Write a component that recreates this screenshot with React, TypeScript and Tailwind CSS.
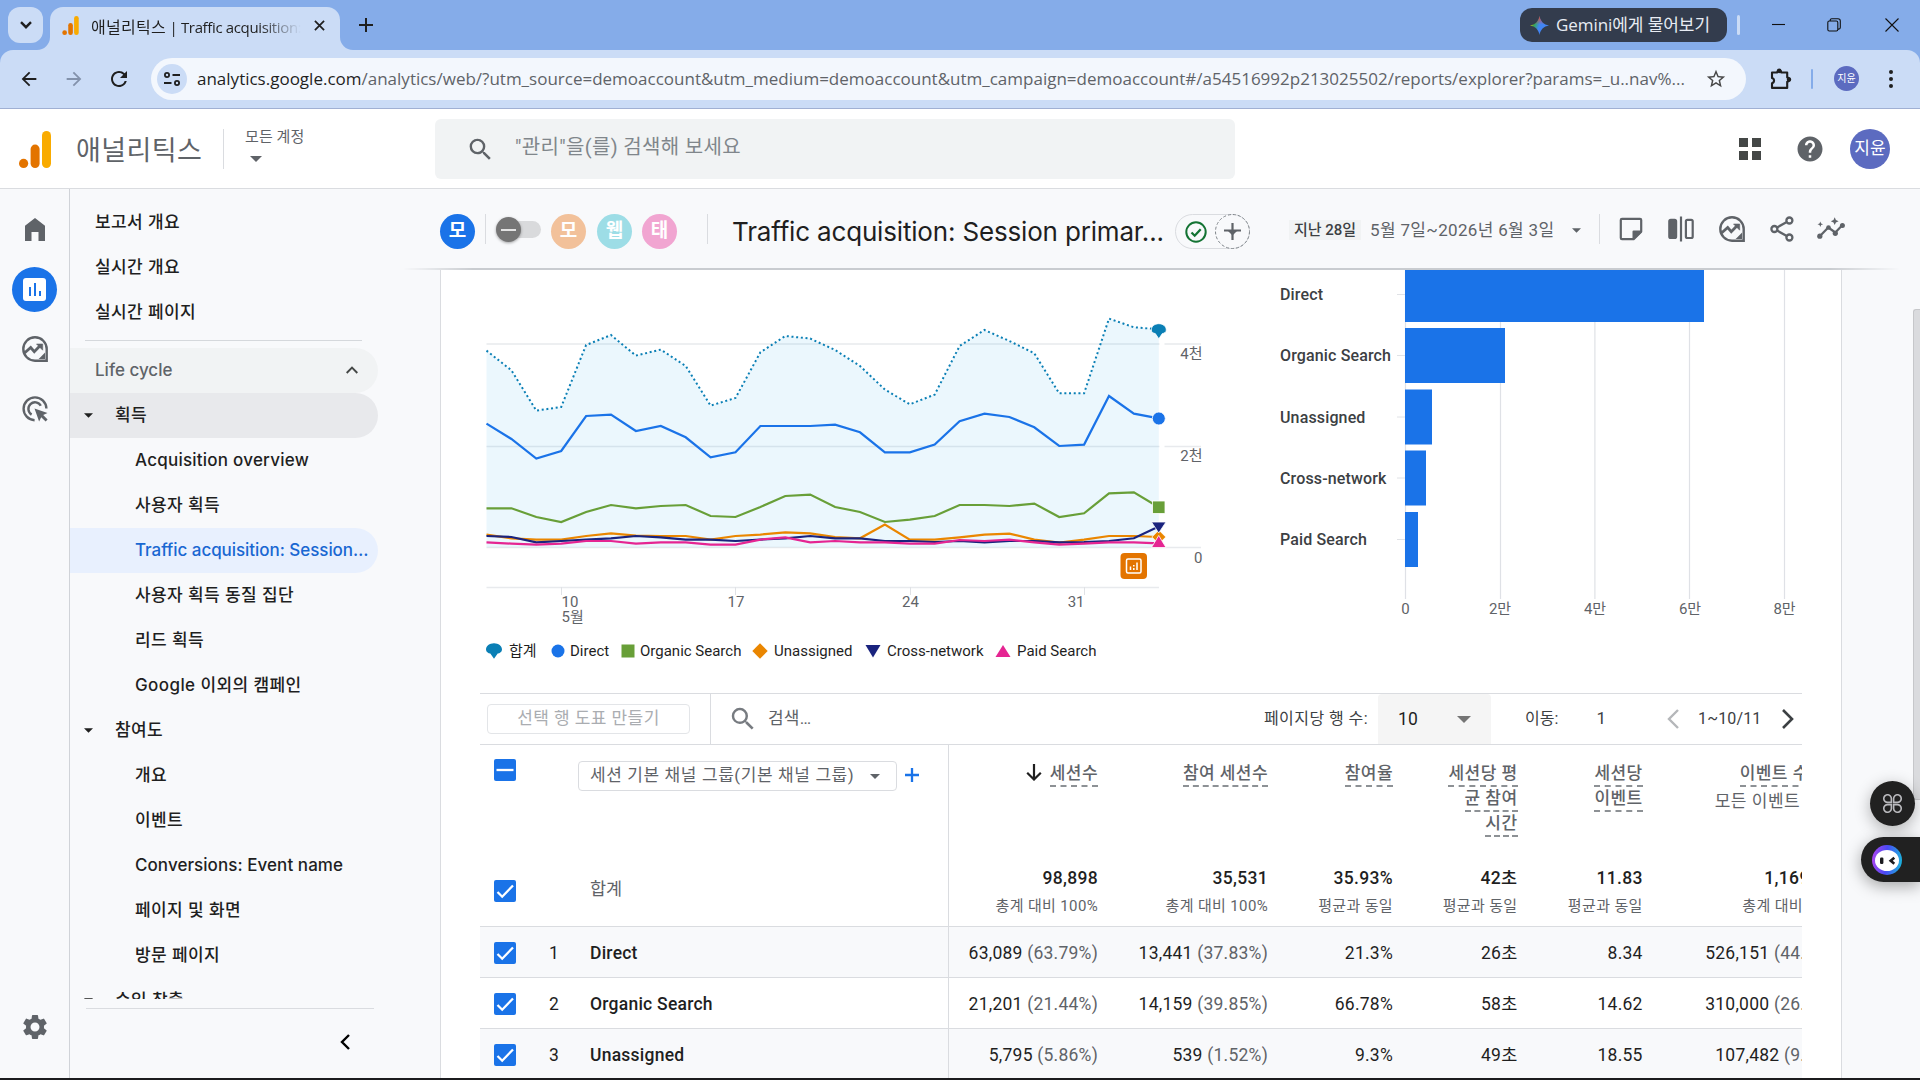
import type { ReactNode } from "react";
import { MdArrowBack, MdArrowForward, MdHelp, MdRefresh, MdSearch, MdSettings, MdStarOutline } from "react-icons/md";

const FONT_INTER = "font-['Inter','Noto_Sans_CJK_KR',sans-serif]";
const FONT_ROBOTO = "font-['Roboto','Noto_Sans_CJK_KR',sans-serif]";
const FONT_CHROME = "font-['Open_Sans','Noto_Sans_CJK_KR',sans-serif]";

/* ---------- icons ---------- */

function AnalyticsLogo({ className }: { className: string }) {
  return (
    <svg viewBox="0 0 32 37" className={className}>
      <circle cx="4.6" cy="32.4" r="4.6" fill="#e37400" />
      <rect x="11.6" y="13.6" width="9" height="23.4" rx="4.5" fill="#e37400" />
      <rect x="23" y="0" width="9" height="37" rx="4.5" fill="#f9ab00" />
    </svg>
  );
}

function ExploreIcon({ className }: { className: string }) {
  return (
    <svg viewBox="0 0 26 26" className={className} fill="none" stroke="#5f6368">
      <path d="M13 1.3a11.7 11.7 0 1 0 0 23.4h11.7V13A11.7 11.7 0 0 0 13 1.3z" strokeWidth="2.4" />
      <path d="M18.5 22.2l3.8-3.8v3.8z" fill="#5f6368" strokeWidth="1.6" />
      <path d="M2.5 17l6.2-5.5 3.6 4.2 6.2-6.4" strokeWidth="2.8" />
      <path d="M14.5 8h6.2v6.2z" fill="#5f6368" strokeWidth="0.6" />
    </svg>
  );
}

function AdsClickIcon() {
  return (
    <svg viewBox="0 0 26 26" className="h-[26px] w-[26px]" fill="none" stroke="#5f6368" strokeWidth="2.4">
      <path d="M12.6 24.2A11.4 11.4 0 1 1 24.4 12.6" />
      <path d="M9.6 18.6A6.6 6.6 0 1 1 18.8 9.8" />
      <path d="M12.5 12.5l13 4.6-4.3 2 4.4 4.5-2 2-4.4-4.4-2.1 4.3z" fill="#5f6368" stroke="none" />
    </svg>
  );
}

function Caret({ className }: { className: string }) {
  return (
    <svg viewBox="0 0 10 5" className={className} fill="currentColor">
      <path d="M0 0h10L5 5z" />
    </svg>
  );
}

/* ---------- browser chrome ---------- */

function TabStrip() {
  return (
    <div className={`flex h-[50px] shrink-0 bg-[#85ace9] text-[#1f1f1f] ${FONT_CHROME}`}>
      <div className="mt-[7px] ml-2 flex h-9 w-[35px] items-center justify-center rounded-xl bg-[#cbdcf6]">
        <svg viewBox="0 0 12 8" className="h-2 w-3" fill="none" stroke="#1f1f1f" strokeWidth="2.4">
          <path d="M1 1.2l5 5 5-5" />
        </svg>
      </div>
      <div className="relative mt-[7px] ml-[7px] flex h-[43px] w-[290px] items-center rounded-t-[13px] bg-[#cbdcf6]">
        <svg viewBox="0 0 13 13" className="absolute bottom-0 -left-[13px] h-[13px] w-[13px]">
          <path d="M13 0v13H0A13 13 0 0 0 13 0z" fill="#cbdcf6" />
        </svg>
        <svg viewBox="0 0 13 13" className="absolute -right-[13px] bottom-0 h-[13px] w-[13px]">
          <path d="M0 0v13h13A13 13 0 0 1 0 0z" fill="#cbdcf6" />
        </svg>
        <AnalyticsLogo className="mb-[7px] ml-3 h-[19px] w-[17px]" />
        <div className="mb-[4px] ml-3 w-[210px] overflow-hidden whitespace-nowrap [mask-image:linear-gradient(to_right,black_80%,transparent_100%)]">
          <span className="text-[16px] tracking-[0.28px]">애널리틱스</span>
          <span className="text-[15px] tracking-[-0.36px]"> | Traffic acquisition:</span>
        </div>
        <svg viewBox="0 0 12 12" className="mb-[7px] ml-[13px] h-[11px] w-[11px]" stroke="#1f1f1f" strokeWidth="1.9">
          <path d="M1 1l10 10M11 1L1 11" />
        </svg>
      </div>
      <svg viewBox="0 0 14 14" className="mt-[18px] ml-[19px] h-[14px] w-[14px]" stroke="#1f1f1f" strokeWidth="2">
        <path d="M7 0v14M0 7h14" />
      </svg>
      <div className="flex-1" />
      <div className="mt-2 flex h-[34px] w-[207px] items-center rounded-xl bg-[#333c4d] pl-[10px]">
        <svg viewBox="0 0 20 20" className="h-[19px] w-[19px]">
          <defs>
            <linearGradient id="gem" x1="0" y1="0.3" x2="1" y2="0.6">
              <stop offset="0" stopColor="#fbbc04" />
              <stop offset="0.25" stopColor="#34a853" />
              <stop offset="0.5" stopColor="#4285f4" />
              <stop offset="1" stopColor="#4285f4" />
            </linearGradient>
            <linearGradient id="gemTop" x1="0" y1="0" x2="0" y2="1">
              <stop offset="0" stopColor="#ea4335" />
              <stop offset="0.45" stopColor="#ea4335" stopOpacity="0" />
            </linearGradient>
          </defs>
          <path d="M10 0c.9 5.600 4.400 9.100 10 10-5.600.9-9.100 4.400-10 10-.9-5.600-4.400-9.100-10-10 5.600-.9 9.100-4.400 10-10z" fill="url(#gem)" />
          <path d="M10 0c.9 5.600 4.400 9.100 10 10-5.600.9-9.100 4.400-10 10-.9-5.600-4.400-9.100-10-10 5.600-.9 9.100-4.400 10-10z" fill="url(#gemTop)" />
        </svg>
        <span className="ml-[7px] text-[17px] leading-[34px] tracking-[-0.07px] whitespace-nowrap text-[#e8ecf3]">Gemini에게 물어보기</span>
      </div>
      <div className="mt-[15px] ml-[10px] h-5 w-[3px] rounded-full bg-[#cbdcf6]" />
      <svg viewBox="0 0 14 14" className="mt-[17px] ml-[32px] h-[14px] w-[14px]" stroke="#111" strokeWidth="1.1">
        <path d="M0 7.500h13" />
      </svg>
      <svg viewBox="0 0 14 14" className="mt-[18px] ml-[41px] h-[14px] w-[14px]" fill="none" stroke="#111" strokeWidth="1.1">
        <rect x="0.800" y="3" width="10" height="10" rx="1.500" />
        <path d="M3.200 3V2.200A1.500 1.500 0 0 1 4.700.7H11a2.300 2.300 0 0 1 2.300 2.300v6.600a1.500 1.500 0 0 1-1.500 1.500h-.8" />
      </svg>
      <svg viewBox="0 0 14 14" className="mt-[18px] mr-[21px] ml-[44px] h-[14px] w-[14px]" stroke="#111" strokeWidth="1.1">
        <path d="M.5.5l13 13M13.500.5l-13 13" />
      </svg>
    </div>
  );
}

function AddressBar() {
  return (
    <div className="h-[59px] shrink-0 bg-[#85ace9]">
      <div className={`flex h-[59px] items-center rounded-t-[13px] border-b border-[#a0b0d3] bg-[#cbdcf6] pb-px text-[#1f1f1f] ${FONT_CHROME}`}>
        <MdArrowBack className="ml-[18px] h-[22px] w-[22px]" />
        <MdArrowForward className="ml-[23px] h-[22px] w-[22px] text-[#8392ab]" />
        <MdRefresh className="ml-[22px] h-[24px] w-[24px]" />
        <div className="ml-5 flex h-[42px] w-[1595px] items-center rounded-full bg-[#f3f7fd] pl-[6px]">
          <div className="flex h-[30px] w-[30px] items-center justify-center rounded-full bg-[#cbdcf6]">
            <svg viewBox="0 0 16 16" className="h-4 w-4" fill="none" stroke="#1f1f1f" strokeWidth="1.8">
              <circle cx="3" cy="4" r="2.100" />
              <path d="M8.500 4H16M0 12h7.500" />
              <circle cx="13" cy="12" r="2.100" />
            </svg>
          </div>
          <div className="ml-[10px] w-[1499px] pt-px text-[17px] leading-[40px] whitespace-nowrap text-[#5f6368]">
            <span className="text-[#1f1f1f]">analytics.google.com</span>
            /analytics/web/?utm_source=demoaccount&amp;utm_medium=demoaccount&amp;utm_campaign=demoaccount#/a54516992p213025502/reports/explorer?params=_u..nav%...
          </div>
          <MdStarOutline className="ml-[9px] h-[22px] w-[22px] text-[#474747]" />
        </div>
        <svg viewBox="0 0 22 22" className="ml-6 h-[22px] w-[22px]" fill="none" stroke="#1f1f1f" strokeWidth="2.1" strokeLinejoin="round">
          <path d="M2 4.500h5.200a2 2 0 0 1 4 0h6v5a2.100 2.100 0 0 1 0 4.200v6.200H2v-4.600a2.800 2.800 0 0 0 0-5.400z" />
          <circle cx="9.200" cy="2.800" r="1.300" fill="#1f1f1f" />
          <circle cx="19" cy="11.500" r="1.200" fill="#1f1f1f" />
        </svg>
        <div className="ml-[19px] h-5 w-[2px] rounded-full bg-[#85ace9]" />
        <div className="ml-[21px] flex h-[25px] w-[25px] items-center justify-center rounded-full bg-[#5c6bc0] text-[10px] text-white">지윤</div>
        <div className="ml-[30px] flex flex-col gap-[3px]">
          <i className="h-1 w-1 rounded-full bg-[#1f1f1f]" />
          <i className="h-1 w-1 rounded-full bg-[#1f1f1f]" />
          <i className="h-1 w-1 rounded-full bg-[#1f1f1f]" />
        </div>
      </div>
    </div>
  );
}

/* ---------- product header ---------- */

function ProductHeader() {
  return (
    <div className={`flex h-20 shrink-0 border-b border-[#dadce0] bg-white ${FONT_ROBOTO}`}>
      <AnalyticsLogo className="mt-[22px] ml-[19px] h-[37px] w-8" />
      <div className="mt-[22px] ml-[25px] w-[147px] text-[27px] leading-[40px] tracking-[0.4px] whitespace-nowrap text-[#5f6368]">애널리틱스</div>
      <div className="mt-5 h-10 w-px bg-[#dadce0]" />
      <div className="ml-[21px] w-[190px] text-[#5f6368]">
        <div className="mt-[16px] text-[15px] leading-[24px] tracking-[0.1px]">모든 계정</div>
        <Caret className="mt-[7px] ml-[5px] h-[6px] w-3" />
      </div>
      <div className="mt-[10px] flex h-[60px] w-[800px] items-center rounded-md bg-[#f1f3f4]">
        <MdSearch className="ml-[31px] h-[29px] w-[29px] text-[#5f6368]" />
        <span className="mb-[4px] ml-5 text-[20px] tracking-[0.34px] whitespace-nowrap text-[#80868b]">"관리"을(를) 검색해 보세요</span>
      </div>
      <div className="flex-1" />
      <div className="mt-[29px] mr-[34px] grid h-[22px] w-[22px] grid-cols-[9px_9px] grid-rows-[9px_9px] gap-1">
        <i className="bg-[#444746]" />
        <i className="bg-[#444746]" />
        <i className="bg-[#444746]" />
        <i className="bg-[#444746]" />
      </div>
      <MdHelp className="mt-[25px] mr-[25px] h-[30px] w-[30px] text-[#5f6368]" />
      <div className="mt-5 mr-[30px] flex h-10 w-10 items-center justify-center rounded-full bg-[#5c6bc0] text-[17px] text-white">지윤</div>
    </div>
  );
}

/* ---------- left navigation ---------- */

function IconRail() {
  return (
    <div className="flex w-[70px] shrink-0 flex-col items-center border-r border-[#d0d3d8]">
      <svg viewBox="0 0 20 23" className="mt-[29px] h-[23px] w-5" fill="#5f6368">
        <path d="M10 0l10 7.700V23h-6.500v-9h-7v9H0V7.700z" />
      </svg>
      <div className="mt-[26px] flex h-[45px] w-[45px] items-center justify-center rounded-full bg-[#1a73e8]">
        <div className="flex h-[23px] w-[23px] items-end justify-center gap-[3px] rounded-[3px] bg-white pb-[5px]">
          <i className="h-[9px] w-[2px] bg-[#1a73e8]" />
          <i className="h-[13px] w-[2px] bg-[#1a73e8]" />
          <i className="h-[5px] w-[2px] bg-[#1a73e8]" />
        </div>
      </div>
      <ExploreIcon className="mt-6 h-[26px] w-[26px]" />
      <div className="mt-[34px]">
        <AdsClickIcon />
      </div>
      <MdSettings className="mt-auto mb-[36px] h-[30px] w-[30px] text-[#5f6368]" />
    </div>
  );
}

function NavItem({ level = 2, className = "", children }: { level?: number; className?: string; children: ReactNode }) {
  const indent = level === 0 ? "pl-[25px]" : level === 1 ? "pl-[14px]" : "pl-[65px]";
  return (
    <div className={`flex h-[45px] w-[308px] shrink-0 items-center rounded-r-full text-[17px] font-medium whitespace-nowrap ${indent} ${className}`}>
      {level === 1 && <Caret className="mr-[22px] h-[5px] w-[9px]" />}
      {children}
    </div>
  );
}

const KO = "tracking-[0.38px]";

function SideNav() {
  return (
    <div className={`flex w-[350px] shrink-0 flex-col text-[#1f1f1f] ${FONT_INTER}`}>
      <div className="flex h-[810px] flex-col overflow-hidden pt-[11px]">
        <NavItem level={0} className={KO}>보고서 개요</NavItem>
        <NavItem level={0} className={KO}>실시간 개요</NavItem>
        <NavItem level={0} className={KO}>실시간 페이지</NavItem>
        <div className="mt-[5px] mb-[7px] ml-[15px] h-px w-[277px] shrink-0 bg-[#d5d8dc]" />
        <NavItem level={0} className="bg-[#f1f3f4] text-[#5f6368]">
          Life cycle
          <svg viewBox="0 0 12 8" className="mr-[20px] mb-[2px] ml-auto h-2 w-3" fill="none" stroke="#444746" strokeWidth="1.9">
            <path d="M.7 7L6 1.700 11.300 7" />
          </svg>
        </NavItem>
        <NavItem level={1} className={`bg-[#e8e9ec] ${KO}`}>획득</NavItem>
        <NavItem className="tracking-[0.23px]">Acquisition overview</NavItem>
        <NavItem className={KO}>사용자 획득</NavItem>
        <NavItem className="bg-[#e8f0fe] tracking-[-0.05px] text-[#1967d2]">Traffic acquisition: Session…</NavItem>
        <NavItem className={KO}>사용자 획득 동질 집단</NavItem>
        <NavItem className={KO}>리드 획득</NavItem>
        <NavItem className="tracking-[0.4px]">Google 이외의 캠페인</NavItem>
        <NavItem level={1} className={KO}>참여도</NavItem>
        <NavItem className={KO}>개요</NavItem>
        <NavItem className={KO}>이벤트</NavItem>
        <NavItem className="tracking-[0.06px]">Conversions: Event name</NavItem>
        <NavItem className={KO}>페이지 및 화면</NavItem>
        <NavItem className={KO}>방문 페이지</NavItem>
        <NavItem level={1} className={KO}>수익 창출</NavItem>
      </div>
      <div className="mt-[9px] ml-4 h-px w-[288px] bg-[#dadce0]" />
      <svg viewBox="0 0 10 16" className="mt-[25px] ml-[270px] h-4 w-[10px]" fill="none" stroke="#000" strokeWidth="2.4">
        <path d="M9 1L2 8l7 7" />
      </svg>
    </div>
  );
}

/* ---------- report toolbar ---------- */

function Chip({ className, children }: { className: string; children: ReactNode }) {
  return (
    <div className={`flex h-[35px] w-[35px] shrink-0 items-center justify-center rounded-full pb-px text-[19px] font-bold text-white ${className}`}>
      {children}
    </div>
  );
}

function ReportToolbar() {
  return (
    <div className="relative h-[81px] shrink-0 bg-[#f8f9fb]">
      <div className="flex pt-[25px] pl-5">
        <Chip className="bg-[#1a73e8]">모</Chip>
        <div className="ml-[10px] h-[30px] w-px bg-[#dadce0]" />
        <div className="mt-[7px] ml-[18px] flex h-[17px] w-[37px] items-center rounded-full bg-[#d9dadc]">
          <div className="-ml-2 flex h-[25px] w-[25px] shrink-0 items-center justify-center rounded-full bg-[#757575] shadow-[0_1px_3px_rgba(0,0,0,0.35)]">
            <i className="h-[2px] w-[15px] bg-[#e3e3e3]" />
          </div>
        </div>
        <Chip className="ml-[10px] bg-[#f2c19a]">모</Chip>
        <Chip className="ml-[11px] bg-[#9ddde6]">웹</Chip>
        <Chip className="ml-[10px] bg-[#f1a5d1]">태</Chip>
        <div className="ml-[30px] h-[30px] w-px bg-[#dadce0]" />
        <div className={`ml-[24px] w-[443px] text-[26px] leading-[35px] tracking-[-0.17px] whitespace-nowrap text-[#1f1f1f] ${FONT_INTER}`}>
          Traffic acquisition: Session primar...
        </div>
        <div className="flex h-[35px] w-[75px] items-center justify-between rounded-full border border-[#dadce0] pl-[9px]">
          <svg viewBox="0 0 22 22" className="h-[22px] w-[22px]" fill="none" stroke="#137333" strokeWidth="2">
            <circle cx="11" cy="11" r="9.700" />
            <path d="M6.500 11.500l3.200 3.200 6-6.500" strokeWidth="2.300" />
          </svg>
          <svg viewBox="0 0 35 35" className="-mr-px h-[35px] w-[35px] shrink-0" fill="none">
            <circle cx="17.500" cy="17.500" r="17" stroke="#80868b" strokeDasharray="3 2" />
            <path d="M17.500 9v17M9 16.500h17" stroke="#5f6368" strokeWidth="2.200" />
            <path d="M12.500 16.500h10l-5 5z" fill="#5f6368" />
          </svg>
        </div>
        <div className={`mt-[6px] ml-[39px] h-5 w-[72px] bg-[#f1f3f4] text-center text-[15px] leading-5 font-medium whitespace-nowrap text-[#3c4043] ${FONT_ROBOTO}`}>지난 28일</div>
        <div className={`ml-[9px] w-[202px] text-[17px] leading-[32px] tracking-[0.33px] whitespace-nowrap text-[#5f6368] ${FONT_ROBOTO}`}>5월 7일~2026년 6월 3일</div>
        <Caret className="mt-[14px] h-[5px] w-[9px] text-[#5f6368]" />
        <div className="ml-[18px] h-[30px] w-px bg-[#dadce0]" />
        <svg viewBox="0 0 24 24" className="mt-[3px] ml-[19px] h-6 w-6" fill="none" stroke="#5f6368" strokeWidth="2.200" strokeLinejoin="round">
          <path d="M3 1.800h18a1.200 1.200 0 0 1 1.200 1.200v11.600l-7.600 7.600H3A1.200 1.200 0 0 1 1.800 21V3A1.200 1.200 0 0 1 3 1.800z" />
          <path d="M14.600 21.500v-6.900h7z" fill="#5f6368" />
        </svg>
        <svg viewBox="0 0 26 26" className="mt-[2px] ml-[25px] h-[26px] w-[26px]" fill="none" stroke="#5f6368" strokeWidth="2.200">
          <rect x="1.300" y="3.800" width="6.800" height="18.200" rx="1.500" fill="#5f6368" />
          <path d="M13 .5v25" />
          <rect x="17.900" y="3.800" width="6.800" height="18.200" rx="1.500" />
        </svg>
        <ExploreIcon className="mt-[2px] ml-[25px] h-[26px] w-[26px]" />
        <svg viewBox="0 0 24 26" className="mt-[2px] ml-[25px] h-[26px] w-6" fill="none" stroke="#5f6368" strokeWidth="2.300">
          <circle cx="4.400" cy="13" r="3" />
          <circle cx="19.400" cy="4.500" r="3" />
          <circle cx="19.400" cy="21.500" r="3" />
          <path d="M7 11.500L16.800 6M7 14.500l9.800 5.500" />
        </svg>
        <svg viewBox="0 0 28 22" className="mt-[3px] ml-[23px] h-[22px] w-7 text-[#5f6368]" fill="currentColor">
          <path d="M3 19l8.300-8.500 7 5L25.500 8" fill="none" stroke="currentColor" strokeWidth="2.200" />
          <circle cx="2.800" cy="19.200" r="2.600" />
          <circle cx="11.500" cy="10.500" r="2.300" />
          <circle cx="18.300" cy="16.300" r="2.600" />
          <circle cx="25.400" cy="8.500" r="2.500" />
          <path d="M17.700.3l1.200 2.700 2.700 1.200-2.700 1.200-1.200 2.700-1.200-2.700-2.700-1.200L16.500 3zM3.300 4.500l.8 2 2 .8-2 .8-.8 2-.8-2-2-.8 2-.8z" />
        </svg>
      </div>
      <div className="absolute right-[20px] bottom-0 -left-[17px] h-[2px] bg-[#c9ccd0] [mask-image:linear-gradient(to_right,transparent,black_70px,black_calc(100%_-_70px),transparent)]" />
    </div>
  );
}

/* ---------- charts ---------- */

const X0 = 486.5;
const STEP = 24.9;
const BASELINE = 547.3;

/* Daily heights above the zero line, three units to the pixel. */
const TOTAL = [590, 531, 410, 421, 607, 637, 575, 593, 544, 425, 448, 585, 634, 626, 592, 544, 473, 429, 458, 604, 652, 619, 582, 462, 462, 686, 660, 654];
const DIRECT = [371, 325, 266, 289, 394, 398, 349, 364, 330, 270, 285, 364, 364, 364, 368, 345, 285, 285, 308, 378, 401, 391, 360, 304, 308, 454, 401, 387];
const ORGANIC = [117, 117, 91, 76, 106, 127, 117, 124, 127, 94, 91, 121, 154, 158, 121, 106, 76, 83, 94, 127, 127, 124, 131, 91, 102, 162, 165, 120];
const UNASSIGNED = [38, 27, 23, 23, 34, 42, 35, 34, 34, 23, 34, 38, 45, 42, 31, 27, 68, 23, 23, 30, 38, 41, 23, 14, 23, 34, 34, 31];
const CROSS = [34, 31, 15, 19, 23, 27, 34, 30, 23, 23, 19, 23, 27, 34, 27, 27, 19, 19, 16, 19, 15, 19, 19, 15, 16, 19, 27, 62];
const PAID = [15, 11, 8, 11, 19, 19, 11, 15, 15, 8, 8, 23, 30, 15, 19, 15, 15, 11, 11, 22, 19, 23, 15, 8, 11, 15, 15, 12];

const points = (d: number[]) => d.map((v, i) => `${(X0 + i * STEP).toFixed(1)},${(BASELINE - v / 3).toFixed(1)}`).join(" ");

function LineChart() {
  const end = X0 + 27 * STEP;
  return (
    <svg viewBox="480 270 740 360" className={`h-[360px] w-[740px] shrink-0 ${FONT_ROBOTO}`} fill="none" fontSize="15">
      <path d="M486.500 344H1201M486.500 446.500H1201M486.500 547.500H1201M486.500 587.500H1159" stroke="#e8eaed" strokeWidth="1.500" />
      <path d="M561.500 587v8M735.500 587v8M910.500 587v8M1084.500 587v8" stroke="#e0e2e6" />
      <polygon points={`${X0},${BASELINE} ${points(TOTAL)} ${end},${BASELINE}`} fill="#039be5" fillOpacity="0.08" />
      <path d="M1159.500 340h5v8h-5zM1159.500 442h5v8h-5z" fill="#fff" />
      <polyline points={points(TOTAL)} stroke="#0a7fb5" strokeWidth="2" strokeDasharray="2 2.700" />
      <polyline points={points(DIRECT)} stroke="#1a73e8" strokeWidth="2.200" />
      <polyline points={points(ORGANIC)} stroke="#689f38" strokeWidth="2.200" />
      <polyline points={points(UNASSIGNED)} stroke="#ea8600" strokeWidth="2.200" />
      <polyline points={points(CROSS)} stroke="#1a237e" strokeWidth="2.200" />
      <polyline points={points(PAID)} stroke="#e52592" strokeWidth="2.200" />
      <g stroke="#fff" strokeWidth="0.8">
        <path d="M1151.300 330c0-3.500 3.200-6.300 7.500-6.300s7.500 2.800 7.500 6.300c0 2.200-2 3.300-4 3.600l-3.500 5.200-3.500-5.200c-2-.3-4-1.400-4-3.600z" fill="#0a7fb5" />
        <circle cx="1158.800" cy="418.500" r="6.500" fill="#1a73e8" />
        <rect x="1152.500" y="501" width="12.500" height="12.500" fill="#689f38" />
        <path d="M1158.800 530l7 7-7 7-7-7z" fill="#ea8600" />
        <path d="M1151.500 522h14.500l-7.300 11z" fill="#1a237e" />
        <path d="M1151.500 547.500h14.500l-7.300-12z" fill="#e52592" />
      </g>
      <rect x="1120.500" y="553" width="26.500" height="26" rx="4" fill="#e37400" />
      <rect x="1126.500" y="559" width="14.500" height="14" rx="1.500" stroke="#fff" strokeWidth="1.500" />
      <path d="M1130.500 570v-3.500M1133.800 570v-2M1133.800 566.500v-1.500M1137 570v-7.500" stroke="#fff" strokeWidth="1.500" />
      <g fill="#5f6368">
        <text x="1202.500" y="358.500" textAnchor="end">4천</text>
        <text x="1202.500" y="460.500" textAnchor="end">2천</text>
        <text x="1202.500" y="562.500" textAnchor="end">0</text>
        <text x="561.500" y="607">10</text>
        <text x="561.500" y="621.500">5월</text>
        <text x="736" y="607" textAnchor="middle">17</text>
        <text x="910.500" y="607" textAnchor="middle">24</text>
        <text x="1084.500" y="607" textAnchor="end">31</text>
      </g>
    </svg>
  );
}

const BARS = [
  { label: "Direct", y: 267, width: 299 },
  { label: "Organic Search", y: 328, width: 100 },
  { label: "Unassigned", y: 389.5, width: 27 },
  { label: "Cross-network", y: 450.5, width: 21 },
  { label: "Paid Search", y: 512, width: 13 },
];

function BarChart() {
  return (
    <svg viewBox="1220 270 620 360" className={`h-[360px] w-[620px] shrink-0 ${FONT_ROBOTO}`} fontSize="15">
      <path d="M1405.500 270V599M1500.500 270V599M1594.900 270V599M1689.500 270V599M1784.500 270V599" stroke="#dfe1e6" strokeWidth="1.200" />
      {BARS.map((b) => (
        <g key={b.label}>
          <path d={`M1397 ${b.y + 27.5}h8`} stroke="#e0e2e6" />
          <rect x="1405" y={b.y} width={b.width} height="55" fill="#1a73e8" />
          <text x="1280" y={b.y + 33.4} fontSize="16" fontWeight="500" fill="#3c4043" letterSpacing="0.14">
            {b.label}
          </text>
        </g>
      ))}
      <g fill="#5f6368" textAnchor="middle">
        <text x="1405.500" y="614">0</text>
        <text x="1500" y="614">2만</text>
        <text x="1595" y="614">4만</text>
        <text x="1690" y="614">6만</text>
        <text x="1784.500" y="614">8만</text>
      </g>
    </svg>
  );
}

function LegendItem({ className, icon, children }: { className: string; icon: ReactNode; children: ReactNode }) {
  return (
    <div className={`flex shrink-0 items-center ${className}`}>
      <svg viewBox="0 0 16 16" className="h-4 w-4">{icon}</svg>
      <span className="whitespace-nowrap">{children}</span>
    </div>
  );
}

function Legend() {
  return (
    <div className="flex h-[42px] pl-[6px] text-[15px] text-[#1f1f1f]">
      <LegendItem className="w-[64px] gap-[7px]" icon={<path d="M0 6.500C0 3 3.500.2 8 .2s8 2.800 8 6.300c0 2.500-2.200 3.800-4.300 4.100L8 15.800l-3.700-5.200C2.200 10.300 0 9 0 6.500z" fill="#0a7fb5" />}>합계</LegendItem>
      <LegendItem className="w-[70px] gap-[4px]" icon={<circle cx="8" cy="8" r="6.500" fill="#1a73e8" />}>Direct</LegendItem>
      <LegendItem className="w-[132px] gap-[4px]" icon={<rect x="1.500" y="1.500" width="13" height="13" fill="#689f38" />}>Organic Search</LegendItem>
      <LegendItem className="w-[113px] gap-[6px]" icon={<path d="M8 .3L15.700 8 8 15.700.3 8z" fill="#ea8600" />}>Unassigned</LegendItem>
      <LegendItem className="w-[130px] gap-[6px]" icon={<path d="M.5 2h15L8 14.500z" fill="#1a237e" />}>Cross-network</LegendItem>
      <LegendItem className="gap-[6px]" icon={<path d="M.5 14h15L8 2z" fill="#e52592" />}>Paid Search</LegendItem>
    </div>
  );
}

/* ---------- table ---------- */

function TableToolbar() {
  return (
    <div className="flex h-[52px] items-center border-y border-[#dadce0] text-[16px] whitespace-nowrap text-[#3c4043]">
      <div className="ml-[7px] flex h-[30px] w-[203px] items-center justify-center rounded border border-[#e3e5e8] text-[17px] tracking-[0.43px] text-[#aaadb1]">선택 행 도표 만들기</div>
      <div className="ml-5 h-full w-px bg-[#dadce0]" />
      <MdSearch className="ml-[17px] h-[30px] w-[30px] text-[#777b80]" />
      <span className="ml-[10px] text-[17px] tracking-[0.2px] text-[#5f6368]">검색…</span>
      <span className="ml-auto tracking-[0.45px]">페이지당 행 수:</span>
      <div className="ml-[10px] flex h-full w-[113px] items-center rounded-t bg-[#f5f5f5] pl-5 text-[17.500px] text-[#1f1f1f]">
        10
        <Caret className="ml-auto mr-5 h-[7px] w-[14px] text-[#757575]" />
      </div>
      <span className="ml-[34px]">이동:</span>
      <span className="ml-[38px] text-[17px]">1</span>
      <svg viewBox="0 0 12 20" className="ml-[61px] h-5 w-3" fill="none" stroke="#b5b7ba" strokeWidth="2.400">
        <path d="M11 1l-9 9 9 9" />
      </svg>
      <span className="ml-[19px] w-[84px] tracking-[0.15px]">1~10/11</span>
      <svg viewBox="0 0 12 20" className="mr-[8px] h-5 w-3" fill="none" stroke="#3c4043" strokeWidth="2.600">
        <path d="M1 1l9 9-9 9" />
      </svg>
    </div>
  );
}

function Checkbox({ partial = false, className = "" }: { partial?: boolean; className?: string }) {
  return (
    <div className={`ml-[14px] flex h-[22px] w-[22px] shrink-0 items-center justify-center rounded-[2px] bg-[#1a73e8] ${className}`}>
      <svg viewBox="0 0 22 22" className="h-[22px] w-[22px]" fill="none" stroke="#fff" strokeWidth="2.300">
        {partial ? <path d="M2.500 11h17" /> : <path d="M3.500 12l4.700 4.700L19 5.500" />}
      </svg>
    </div>
  );
}

const COLS = ["w-[149px]", "w-[170px]", "w-[125px]", "w-[124.500px]", "w-[125.200px]", "w-[202px]"];

const HEADERS = [["세션수"], ["참여 세션수"], ["참여율"], ["세션당 평", "균 참여", "시간"], ["세션당", "이벤트"]];

const TOTALS = [
  ["98,898", "총계 대비 100%"],
  ["35,531", "총계 대비 100%"],
  ["35.93%", "평균과 동일"],
  ["42초", "평균과 동일"],
  ["11.83", "평균과 동일"],
  ["1,169,226", "총계 대비 100%"],
];

const ROWS = [
  { name: "Direct", shaded: true, cells: [["63,089", "(63.79%)"], ["13,441", "(37.83%)"], ["21.3%"], ["26초"], ["8.34"], ["526,151", "(44.99%)"]] },
  { name: "Organic Search", shaded: false, cells: [["21,201", "(21.44%)"], ["14,159", "(39.85%)"], ["66.78%"], ["58초"], ["14.62"], ["310,000", "(26.51%)"]] },
  { name: "Unassigned", shaded: true, cells: [["5,795", "(5.86%)"], ["539", "(1.52%)"], ["9.3%"], ["49초"], ["18.55"], ["107,482", "(9.19%)"]] },
];

function HeaderLine({ children }: { children: ReactNode }) {
  return (
    <div className="border-b-2 border-dashed border-[#8d9195] pt-px pb-[2px] leading-5">{children}</div>
  );
}

function DataTable() {
  return (
    <div className="w-[1322px] overflow-hidden whitespace-nowrap">
      <TableToolbar />
      <div className="flex h-[104px] text-[17px] text-[#5f6368]">
        <div className="flex w-[469px] shrink-0 border-r border-[#dadce0]">
          <Checkbox partial className="mt-[14px]" />
          <div className="mt-4 ml-[62px] flex h-[30px] w-[319px] items-center rounded border border-[#dadce0] pl-[11px]">
            <span className="tracking-[0.6px]">세션 기본 채널 그룹(기본 채널 그룹)</span>
            <Caret className="ml-auto mr-[16px] h-[5px] w-[10px]" />
          </div>
          <svg viewBox="0 0 14 14" className="mt-[23px] ml-[8px] h-[14px] w-[14px]" stroke="#1a73e8" strokeWidth="2.300">
            <path d="M7 0v14M0 7h14" />
          </svg>
        </div>
        {HEADERS.map((lines, i) => (
          <div key={i} className={`flex shrink-0 justify-end pt-[17px] font-medium ${COLS[i]}`}>
            {i === 0 && (
              <svg viewBox="0 0 16 17" className="mt-[2px] mr-[8px] h-[17px] w-4" fill="none" stroke="#1f1f1f" strokeWidth="2.200">
                <path d="M8 0v15.500M1.200 8.800L8 15.500l6.800-6.700" />
              </svg>
            )}
            <div className="flex flex-col items-end tracking-[0.45px]">
              {lines.map((l) => (
                <HeaderLine key={l}>{l}</HeaderLine>
              ))}
            </div>
          </div>
        ))}
        <div className="w-[202px] shrink-0 pt-[17px] pl-[72px]">
          <div className="ml-[25px] flex font-medium tracking-[0.45px]">
            <HeaderLine>이벤트 수</HeaderLine>
          </div>
          <div className="mt-[4px] flex items-center tracking-[0.530px]">
            <span className="leading-5">모든 이벤트</span>
            <Caret className="ml-3 h-[5px] w-[10px]" />
          </div>
        </div>
      </div>
      <div className="flex h-[78px] border-b border-[#dadce0]">
        <div className="flex w-[469px] shrink-0 items-center border-r border-[#dadce0] pb-px">
          <Checkbox className="mt-2" />
          <span className="mt-[5px] ml-[74px] text-[17.500px] text-[#5f6368]">합계</span>
        </div>
        {TOTALS.map(([value, note], i) => (
          <div key={i} className={`shrink-0 pt-[15px] text-right ${COLS[i]}`}>
            <div className="text-[17.500px] leading-7 font-medium tracking-[0.320px] text-[#1f1f1f]">{value}</div>
            <div className="text-[15px] leading-7 tracking-[0.35px] text-[#5f6368]">{note}</div>
          </div>
        ))}
      </div>
      {ROWS.map((row, r) => (
        <div key={row.name} className={`flex h-[51px] items-center border-b border-[#dadce0] text-[17.500px] tracking-[0.240px] text-[#1f1f1f] ${row.shaded ? "bg-[#f8f9fb]" : "bg-white"}`}>
          <div className="flex h-full w-[469px] shrink-0 items-center border-r border-[#dadce0]">
            <Checkbox className="mt-px" />
            <span className="ml-[28px] w-[20px] pt-[2px] text-center">{r + 1}</span>
            <span className="ml-[26px] pt-[2px] font-medium">{row.name}</span>
          </div>
          {row.cells.map(([value, share], i) => (
            <div key={i} className={`shrink-0 pt-[2px] text-right ${COLS[i]}`}>
              {value}
              {share && <span className="text-[#5f6368]"> {share}</span>}
            </div>
          ))}
        </div>
      ))}
    </div>
  );
}

/* ---------- floating widgets ---------- */

function FloatingWidgets() {
  return (
    <div className="absolute top-[781px] right-0 flex w-[60px] flex-col items-end">
      <div className="mr-[5px] flex h-[45px] w-[45px] items-center justify-center rounded-full bg-[#212121] shadow-[0_4px_16px_rgba(0,0,0,0.3)]">
        <svg viewBox="0 0 20 20" className="h-[19px] w-[19px]" fill="none" stroke="#b9b9bd" strokeWidth="1.700">
          <path d="M8.800 8.800H5A4 4 0 1 1 8.800 5zM11.200 8.800V5A4 4 0 1 1 15 8.800zM8.800 11.200V15A4 4 0 1 1 5 11.200zM11.200 11.200H15A4 4 0 1 1 11.200 15z" />
        </svg>
      </div>
      <div className="mt-[11px] flex h-[45px] w-[59px] items-center rounded-l-full bg-[#212121] pl-[11px] shadow-[0_4px_16px_rgba(0,0,0,0.35)]">
        <svg viewBox="0 0 30 30" className="h-[30px] w-[30px]">
          <defs>
            <linearGradient id="face" x1="0" y1="0.700" x2="1" y2="0.800">
              <stop offset="0" stopColor="#a445f0" />
              <stop offset="0.450" stopColor="#4a4af5" />
              <stop offset="1" stopColor="#18b8dc" />
            </linearGradient>
          </defs>
          <circle cx="15" cy="15" r="15" fill="url(#face)" />
          <ellipse cx="15" cy="15.500" rx="12" ry="10.500" fill="#fff" />
          <rect x="8" y="12.500" width="3.400" height="6.500" rx="1.200" fill="#1b1b1f" />
          <path d="M22.300 12.700l-3.600 3 3.600 3" fill="none" stroke="#1b1b1f" strokeWidth="2.600" />
        </svg>
      </div>
    </div>
  );
}

export default function App() {
  return (
    <div className="relative flex h-[1080px] w-[1920px] flex-col overflow-hidden bg-[#f8f9fb]">
      <TabStrip />
      <AddressBar />
      <ProductHeader />
      <div className="flex min-h-0 flex-1 overflow-hidden">
        <IconRail />
        <SideNav />
        <div className={`flex w-[1500px] flex-col ${FONT_ROBOTO}`}>
          <ReportToolbar />
          <div className="ml-5 w-[1402px] flex-1 overflow-hidden border-x border-[#dadce0] bg-white pl-[39px]">
            <div className="flex">
              <LineChart />
              <BarChart />
            </div>
            <Legend />
            <div className="h-[21px]" />
            <DataTable />
          </div>
        </div>
      </div>
      <div className="h-[2px] shrink-0 bg-[#1c1c1e]" />
      <div className="absolute top-[309px] right-0 h-[491px] w-[7px] rounded-l-[3px] border border-r-0 border-[#c6c7ca] bg-[#dadbde]" />
      <FloatingWidgets />
    </div>
  );
}
